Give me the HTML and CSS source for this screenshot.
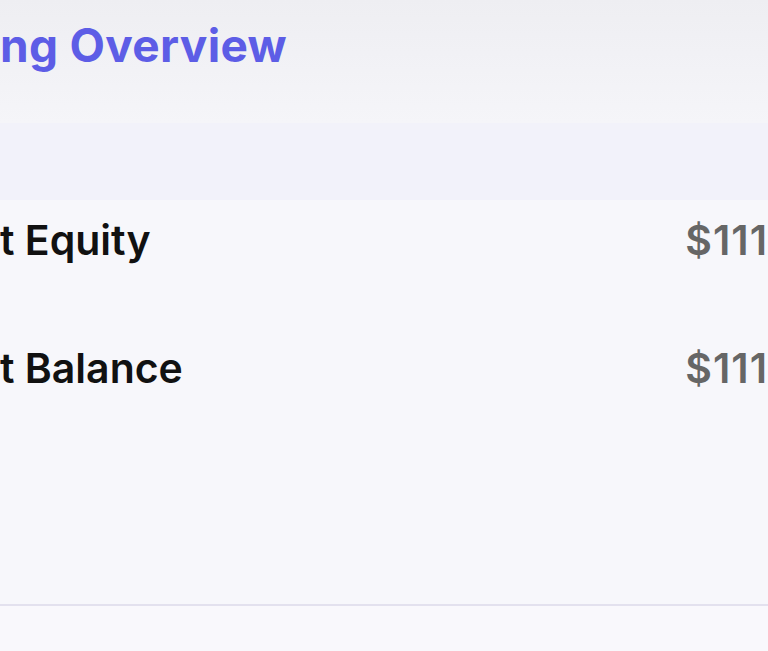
FILE: index.html
```html
<!DOCTYPE html>
<html>
<head>
<meta charset="utf-8">
<link rel="stylesheet" href="styles.css">
</head>
<body>
<div class="page">
  <header class="header">
    <h1 class="title">ng Overview</h1>
  </header>
  <div class="table">
    <div class="thead"></div>
    <div class="row">
      <span class="label">t Equity</span>
      <span class="value">$111</span>
    </div>
    <div class="row">
      <span class="label">t Balance</span>
      <span class="value">$111</span>
    </div>
    <div class="spacer"></div>
  </div>
  <footer class="footer"></footer>
</div>
</body>
</html>
```
FILE: styles.css
```css
html, body {
  margin: 0;
  padding: 0;
  overflow: hidden;
  width: 768px;
  height: 651px;
  background: #f7f7fb;
}
.page {
  width: 768px;
  display: flex;
  flex-direction: column;
  font-family: Inter, "Noto Sans", sans-serif;
}
.header {
  height: 123px;
  background: linear-gradient(#eeeef2, #f5f5f9);
  box-sizing: border-box;
  padding-top: 15px;
}
.title {
  margin: 0;
  font-size: 46px;
  line-height: 60px;
  font-weight: 700;
  color: #5d5de6;
  padding-left: 0;
  letter-spacing: 0.3px;
}
.thead {
  height: 77px;
  background: #f2f2fa;
}
.row {
  height: 128px;
  display: flex;
  justify-content: space-between;
  align-items: flex-start;
  box-sizing: border-box;
  padding-top: 20px;
  font-size: 41px;
  line-height: 40px;
  font-weight: 600;
}
.label {
  color: #111;
}
.value {
  color: #666;
  letter-spacing: 1px;
}
.spacer {
  height: 148px;
}
.footer {
  border-top: 2px solid #e3e1ee;
  height: 60px;
  background: #f9f8fc;
}
```
